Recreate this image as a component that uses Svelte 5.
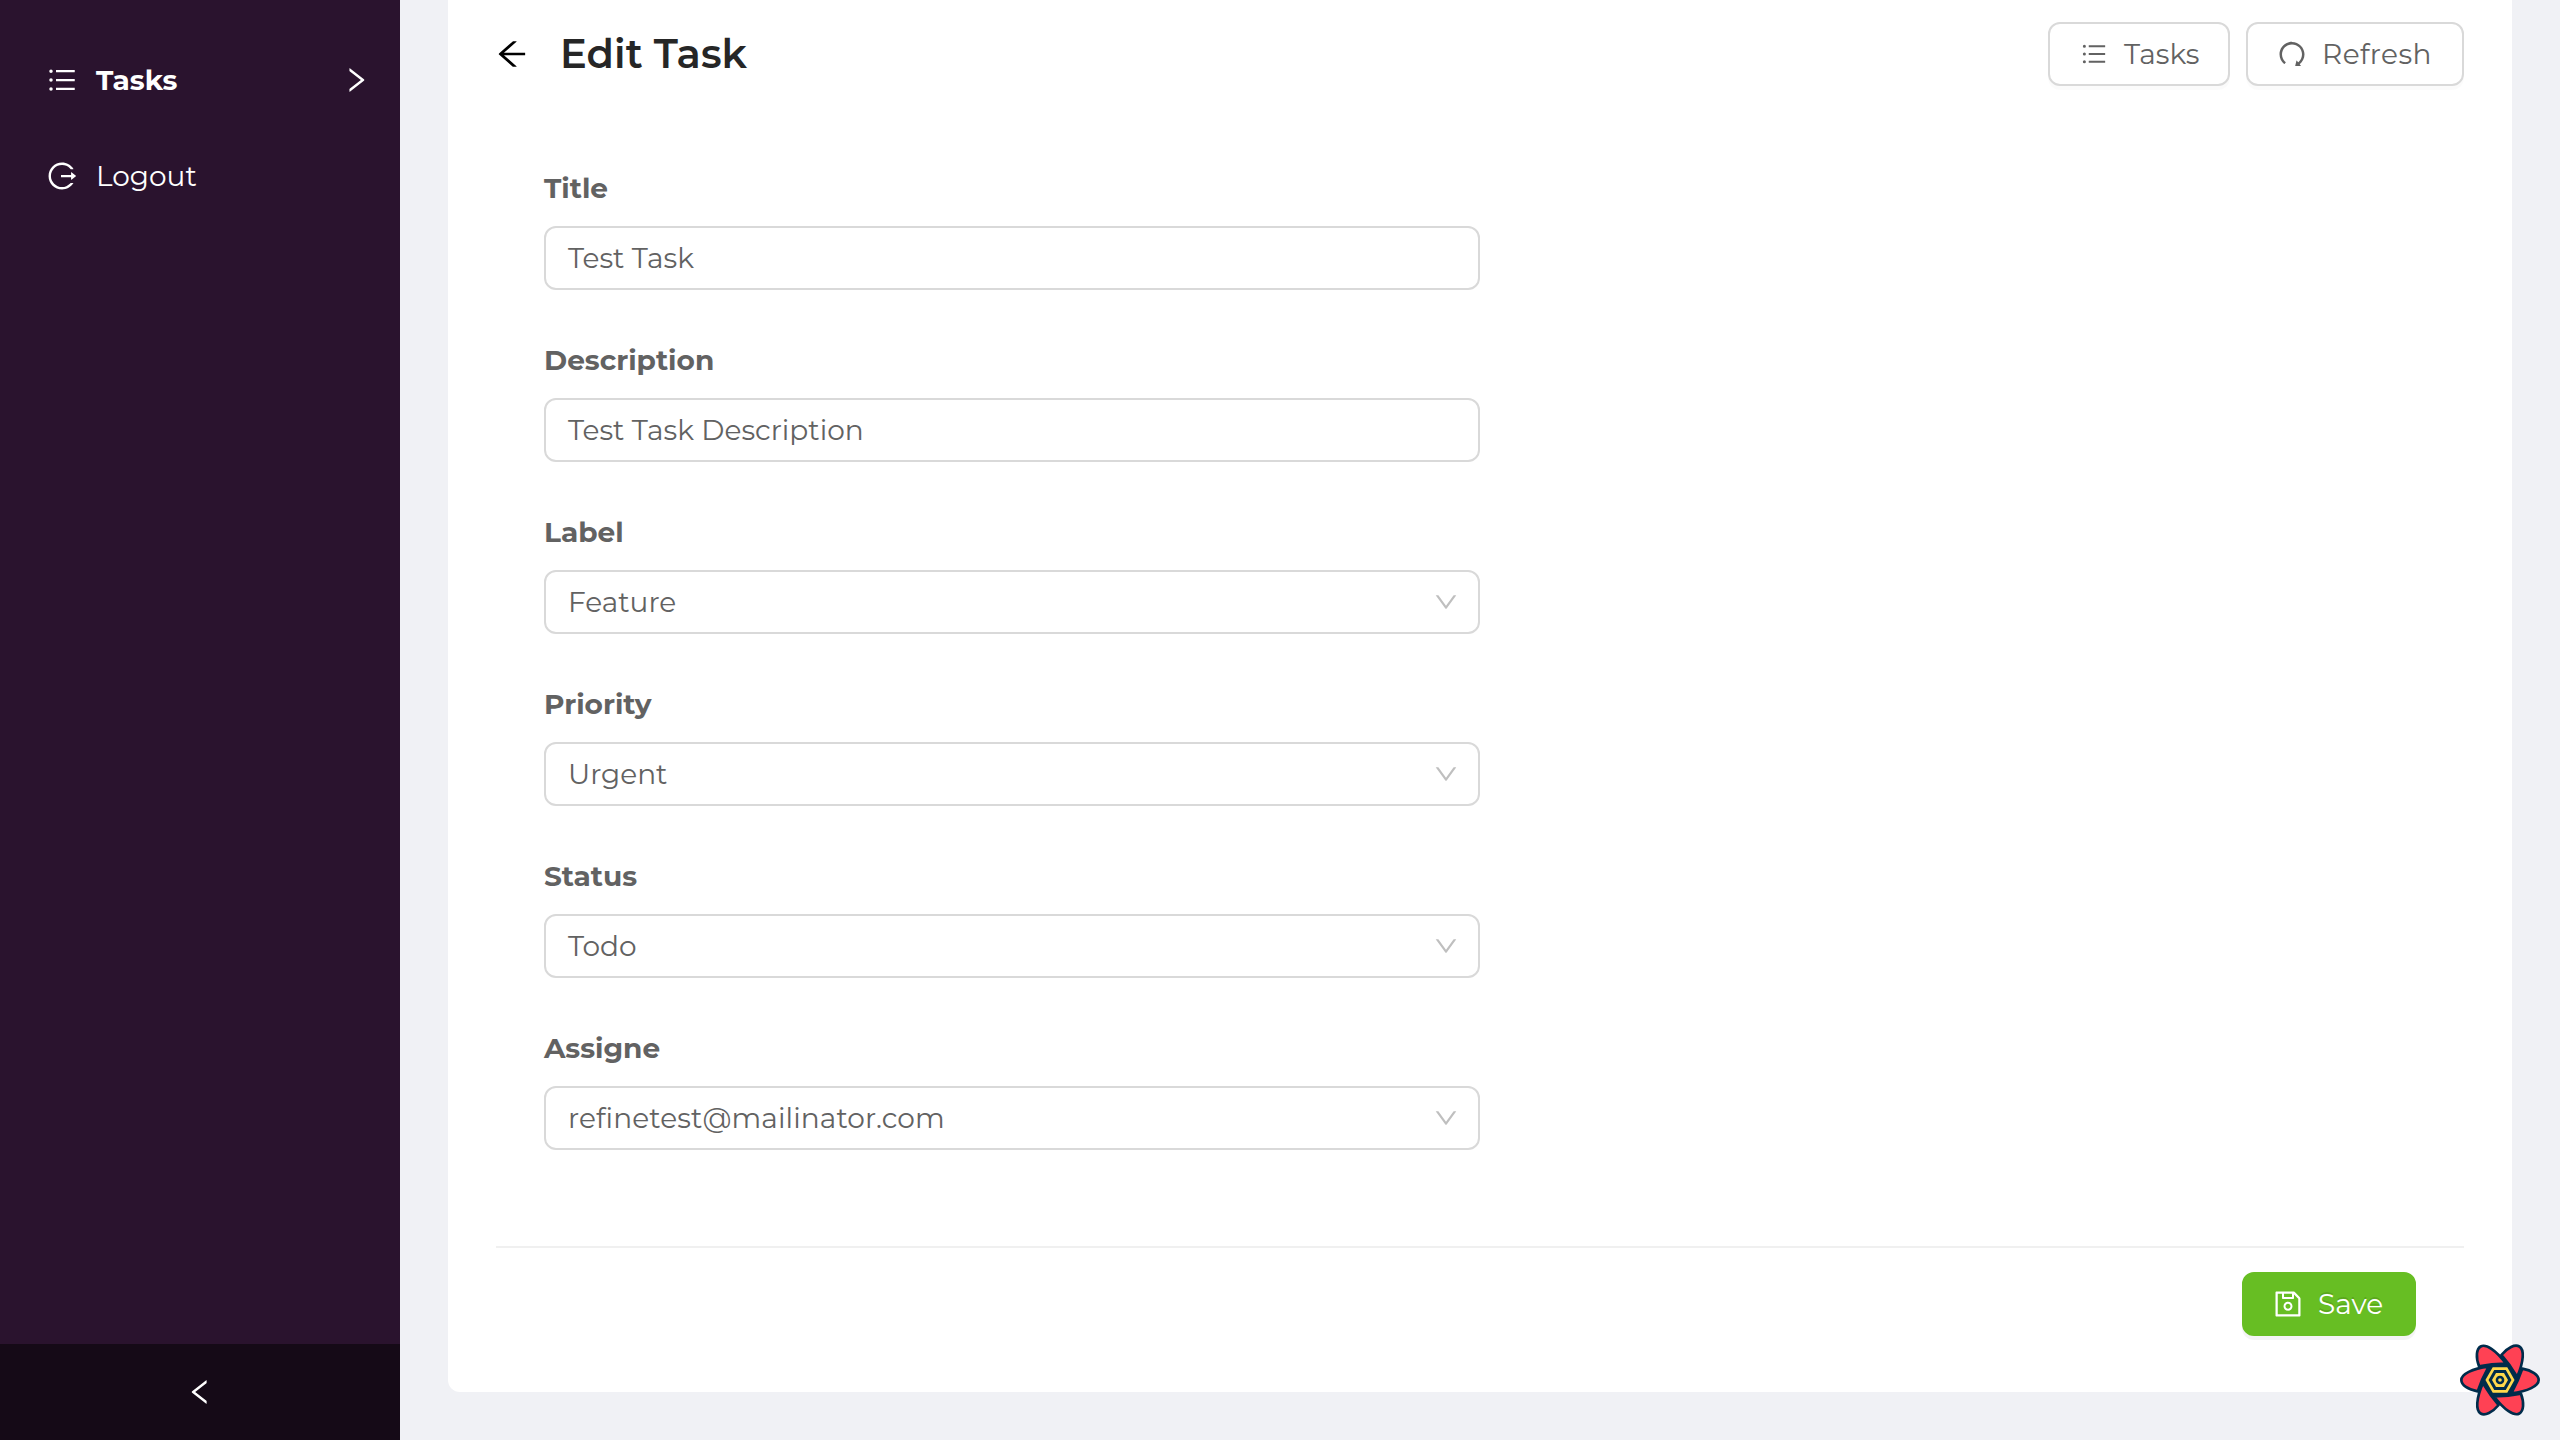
<script>
  const paths = {
    list: 'M912 192H328c-4.4 0-8 3.6-8 8v56c0 4.4 3.6 8 8 8h584c4.4 0 8-3.6 8-8v-56c0-4.4-3.6-8-8-8zm0 284H328c-4.4 0-8 3.6-8 8v56c0 4.4 3.6 8 8 8h584c4.4 0 8-3.6 8-8v-56c0-4.4-3.6-8-8-8zm0 284H328c-4.4 0-8 3.6-8 8v56c0 4.4 3.6 8 8 8h584c4.4 0 8-3.6 8-8v-56c0-4.4-3.6-8-8-8zM104 228a56 56 0 10112 0 56 56 0 10-112 0zm0 284a56 56 0 10112 0 56 56 0 10-112 0zm0 284a56 56 0 10112 0 56 56 0 10-112 0z',
    logout: 'M868 732h-70.3c-4.8 0-9.3 2.1-12.3 5.8-7 8.5-14.5 16.7-22.4 24.5a353.84 353.84 0 01-112.7 75.9A352.8 352.8 0 01512.4 866c-47.9 0-94.3-9.4-137.9-27.8a353.84 353.84 0 01-112.7-75.9 353.28 353.28 0 01-76-112.5C167.3 606.2 158 559.9 158 512s9.4-94.2 27.8-137.8c17.8-42.1 43.4-80 76-112.5s70.5-58.1 112.7-75.9c43.6-18.4 90-27.8 137.9-27.8 47.9 0 94.3 9.3 137.9 27.8 42.2 17.8 80.1 43.4 112.7 75.9 7.9 7.9 15.3 16.1 22.4 24.5 3 3.7 7.6 5.8 12.3 5.8H868c6.3 0 10.2-7 6.7-12.3C798 160.5 663.8 81.6 511.3 82 271.7 82.6 79.6 277.1 82 516.4 84.4 751.9 276.2 942 512.4 942c152.1 0 285.7-78.8 362.3-197.7 3.4-5.3-.4-12.3-6.7-12.3zm88.9-226.3L815 393.7c-5.3-4.2-13-.4-13 6.3v76H488c-4.4 0-8 3.6-8 8v56c0 4.4 3.6 8 8 8h314v76c0 6.7 7.8 10.5 13 6.3l141.9-112a8 8 0 000-12.6z',
    right: 'M765.7 486.8L314.9 134.7A7.97 7.97 0 00302 141v77.3c0 4.9 2.3 9.6 6.1 12.6l360 281.1-360 281.1c-3.9 3-6.1 7.7-6.1 12.6V883c0 6.7 7.7 10.4 12.9 6.3l450.8-352.1a31.96 31.96 0 000-50.4z',
    left: 'M724 218.3V141c0-6.7-7.7-10.4-12.9-6.3L260.3 486.8a31.86 31.86 0 000 50.3l450.8 352.1c5.3 4.1 12.9.4 12.9-6.3v-77.3c0-4.9-2.3-9.6-6.1-12.6l-360-281 360-281.1c3.8-3 6.1-7.7 6.1-12.6z',
    down: 'M884 256h-75c-5.1 0-9.9 2.5-12.9 6.6L512 654.2 227.9 262.6c-3-4.1-7.8-6.6-12.9-6.6h-75c-6.5 0-10.3 7.4-6.5 12.7l352.6 486.1c12.8 17.6 39 17.6 51.7 0l352.6-486.1c3.9-5.3.1-12.7-6.4-12.7z',
    back: 'M872 474H286.9l350.2-304c5.6-4.9 2.2-14-5.2-14h-88.5c-3.9 0-7.6 1.4-10.5 3.9L155 487.8a31.96 31.96 0 000 48.3L535.1 866c1.5 1.3 3.3 2 5.2 2h91.5c7.4 0 10.8-9.2 5.2-14L286.9 550H872c4.4 0 8-3.6 8-8v-60c0-4.4-3.6-8-8-8z',
    redo: 'M758.2 839.1C851.8 765.9 912 651.9 912 523.9 912 303 733.5 124.3 512.6 124 291.4 123.7 112 302.8 112 523.9c0 125.2 57.5 236.9 147.6 310.2 3.5 2.8 8.6 2.2 11.4-1.3l39.4-50.5c2.7-3.4 2.1-8.3-1.2-11.1-8.1-6.6-15.9-13.7-23.4-21.2a318.64 318.64 0 01-68.6-101.7C200.4 609 192 567.1 192 523.9s8.4-85.1 25.1-124.5c16.1-38.1 39.2-72.3 68.6-101.7 29.4-29.4 63.6-52.5 101.7-68.6C426.9 212.4 468.8 204 512 204s85.1 8.4 124.5 25.1c38.1 16.1 72.3 39.2 101.7 68.6 29.4 29.4 52.5 63.6 68.6 101.7 16.7 39.4 25.1 81.3 25.1 124.5s-8.4 85.1-25.1 124.5a318.64 318.64 0 01-68.6 101.7c-9.3 9.3-19.1 18-29.3 26L668.2 724a8 8 0 00-14.1 3l-39.6 162.2c-1.2 5 2.6 9.9 7.7 9.9l167 .8c6.7 0 10.5-7.7 6.3-12.9l-37.3-47.9z',
    save: 'M893.3 293.3L730.7 130.7c-7.5-7.5-16.7-13-26.7-16V112H144c-17.7 0-32 14.3-32 32v736c0 17.7 14.3 32 32 32h736c17.7 0 32-14.3 32-32V338.5c0-17-6.7-33.2-18.7-45.2zM384 184h256v104H384V184zm456 656H184V184h136v136c0 17.7 14.3 32 32 32h320c17.7 0 32-14.3 32-32V205.8l136 136V840zM512 442c-79.5 0-144 64.5-144 144s64.5 144 144 144 144-64.5 144-144-64.5-144-144-144zm0 224c-44.2 0-80-35.8-80-80s35.8-80 80-80 80 35.8 80 80-35.8 80-80 80z',
  };

  const fields = [
    { label: 'Title', value: 'Test Task' },
    { label: 'Description', value: 'Test Task Description' },
    { label: 'Label', value: 'Feature', select: true },
    { label: 'Priority', value: 'Urgent', select: true },
    { label: 'Status', value: 'Todo', select: true },
    { label: 'Assigne', value: 'refinetest@mailinator.com', select: true, loose: true },
  ];

  const petals = [0, 60, 120, 180, 240, 300];
</script>

{#snippet icon(name, cls = '', box = '64 64 896 896')}
  <svg class="icon {cls}" viewBox={box} aria-hidden="true"><path d={paths[name]} /></svg>
{/snippet}

<div class="layout">
  <aside class="sider">
    <nav>
      <div class="item active">
        {@render icon('list')}
        <span class="name">Tasks</span>
        {@render icon('right')}
      </div>
      <div class="item">
        {@render icon('logout')}
        <span class="name">Logout</span>
      </div>
    </nav>
    <div class="collapse">{@render icon('left')}</div>
  </aside>

  <main>
    <section class="card">
      <header>
        {@render icon('back', 'back')}
        <h1>Edit Task</h1>
        <div class="actions">
          <div class="btn tasks">{@render icon('list', '', '0 0 1024 1024')}<span>Tasks</span></div>
          <div class="btn refresh">{@render icon('redo')}<span>Refresh</span></div>
        </div>
      </header>

      <div class="form">
        {#each fields as f}
          <div class="field">
            <div class="label">{f.label}</div>
            <div class="control">
              <span class:loose={f.loose}>{f.value}</span>
              {#if f.select}{@render icon('down', 'down')}{/if}
            </div>
          </div>
        {/each}
      </div>

      <footer>
        <div class="btn save">{@render icon('save')}<span>Save</span></div>
      </footer>
    </section>
  </main>

  <svg class="devtools" viewBox="-126 -120 252 240" aria-hidden="true">
    <polygon class="core" points="-58,0 -29,-50 29,-50 58,0 29,50 -29,50" />
    {#each petals as a}
      <path class="petal" transform="rotate({a})" d="M67-34C96-29 116-15 116 0C116 18 84 34 34 40Q55 2 67-34Z" />
    {/each}
    <polygon class="core" points="-50,0 -25,-43.5 25,-43.5 50,0 25,43.5 -25,43.5" />
    <polygon class="ring" points="-39,0 -19.5,-34 19.5,-34 39,0 19.5,34 -19.5,34" />
    <polygon class="dot" points="-24,0 -12,-21 12,-21 24,0 12,21 -12,21" />
    <circle class="core" r="13" />
    <circle class="dot" r="5.5" />
  </svg>
</div>

<style>
  :global(body) {
    margin: 0;
    background: #f0f1f5;
  }
  .layout {
    position: relative;
    display: flex;
    width: 2560px;
    height: 1440px;
    overflow: hidden;
    background: #f0f1f5;
    color: #626262;
    font-family: Montserrat, Inter, 'Open Sans', sans-serif;
    font-size: 28px;
    line-height: 44px;
    white-space: nowrap;
  }
  .icon {
    flex: none;
    display: block;
    width: 28px;
    height: 28px;
    fill: currentColor;
  }
  .sider {
    display: flex;
    flex-direction: column;
    width: 400px;
    flex: none;
    background: #2a132e;
    color: #fff;
  }
  nav {
    flex: 1;
    padding-top: 32px;
  }
  .item {
    display: flex;
    align-items: center;
    gap: 20px;
    height: 96px;
    padding: 0 30px 0 48px;
  }
  .name {
    flex: 1;
  }
  .active .name {
    font-weight: 700;
  }
  .collapse {
    display: flex;
    align-items: center;
    justify-content: center;
    height: 96px;
    background: #150a17;
  }
  main {
    flex: 1;
    padding: 0 48px;
  }
  .card {
    box-sizing: border-box;
    height: 1392px;
    padding: 22px 48px 0;
    background: #fff;
    border-radius: 0 0 12px 12px;
  }
  header {
    display: flex;
    align-items: center;
    height: 64px;
  }
  .back {
    width: 32px;
    height: 32px;
    color: #000;
  }
  h1 {
    flex: 1;
    margin: 0 0 0 32px;
    color: #262626;
    font-size: 40px;
    line-height: 64px;
    font-weight: 600;
  }
  .actions {
    display: flex;
    gap: 16px;
  }
  .btn {
    box-sizing: border-box;
    display: flex;
    align-items: center;
    gap: 16px;
    height: 64px;
    padding-left: 30px;
    border: 2px solid #d9d9d9;
    border-radius: 12px;
    background: #fff;
    box-shadow: 0 4px 0 rgba(0, 0, 0, 0.016);
  }
  .tasks {
    width: 182px;
  }
  .refresh {
    width: 218px;
  }
  .refresh span {
    letter-spacing: 0.4px;
  }
  .save {
    width: 174px;
    color: #fff;
    background: #67be23;
    border-color: #67be23;
    text-shadow: 0 -2px 0 rgba(0, 0, 0, 0.12);
    box-shadow: 0 4px 0 rgba(0, 0, 0, 0.045);
  }
  .form {
    width: 936px;
    margin: 80px 0 0 48px;
  }
  .field {
    margin-bottom: 48px;
  }
  .label {
    margin-bottom: 16px;
    font-weight: 700;
  }
  .control {
    box-sizing: border-box;
    display: flex;
    align-items: center;
    justify-content: space-between;
    height: 64px;
    padding: 0 20px 0 22px;
    border: 2px solid #d9d9d9;
    border-radius: 12px;
  }
  .loose {
    letter-spacing: 0.1px;
  }
  .down {
    width: 24px;
    height: 24px;
    color: #bfbfbf;
  }
  footer {
    display: flex;
    justify-content: flex-end;
    margin-top: 96px;
    padding: 24px 48px 0;
    border-top: 2px solid #f0f0f0;
  }
  .devtools {
    position: absolute;
    left: 2458px;
    top: 1340px;
    width: 84px;
    height: 80px;
  }
  .core {
    fill: #002c4b;
  }
  .petal {
    fill: #ff4154;
    stroke: #002c4b;
    stroke-width: 8;
    stroke-linejoin: round;
  }
  .ring {
    fill: #002c4b;
    stroke: #ffd94c;
    stroke-width: 8;
  }
  .dot {
    fill: #ffd94c;
  }
</style>
